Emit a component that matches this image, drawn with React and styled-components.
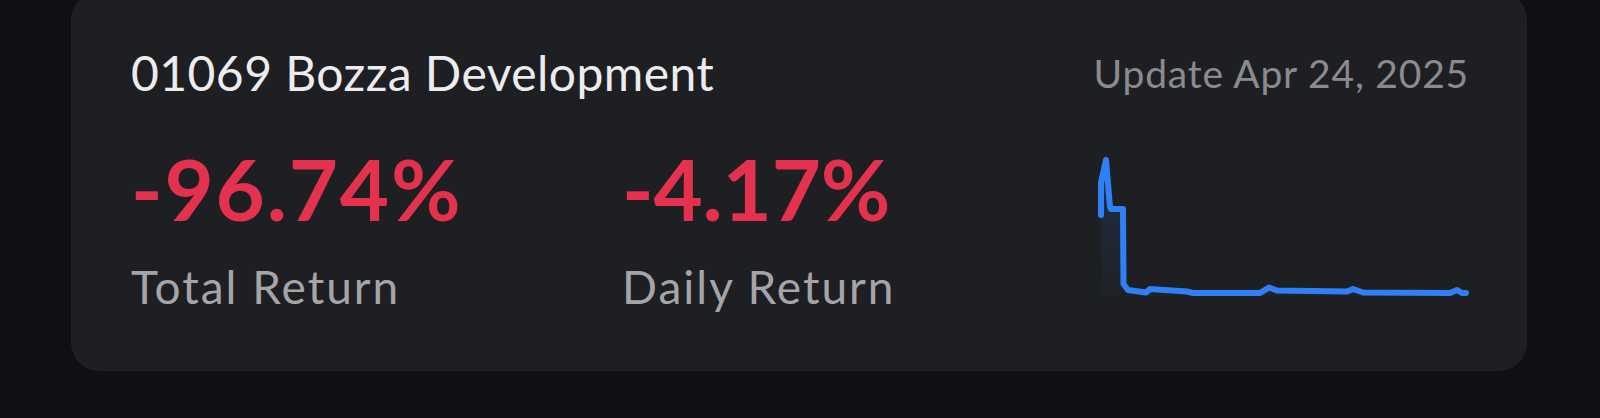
import React from "react"
import styled, { createGlobalStyle } from "styled-components"

const GlobalStyle = createGlobalStyle`
  html, body {
    margin: 0;
    padding: 0;
    background: #0f1013;
  }
  body {
    font-family: "Lato", "Noto Sans", sans-serif;
    overflow: hidden;
  }
`

// chart points in page coords, shifted into the svg box below
const ORIGIN = [1089, 150]
const POINTS = [
  [1101, 215], [1101, 183], [1106, 160], [1110, 207], [1111, 209],
  [1123, 209], [1123.5, 284], [1128, 290], [1146, 292.5], [1150, 289],
  [1187, 291.5], [1193, 293], [1260, 293], [1269, 287.5], [1277, 290.5],
  [1347, 291.5], [1353, 289], [1363, 292.5], [1450, 293], [1457, 290],
  [1462, 293], [1466, 293],
]

const App = () => {
  const pts = POINTS.map(([x, y]) => [x - ORIGIN[0], y - ORIGIN[1]])
  const line = pts.map((p, i) => `${i ? "L" : "M"}${p[0]} ${p[1]}`).join(" ")
  const last = pts[pts.length - 1]
  const area = `${line} L${last[0]} 146 L${pts[0][0]} 146 Z`

  return (
    <>
      <GlobalStyle />
      <Page>
        <Card>
          <Header>
            <Title>01069 Bozza Development</Title>
            <Updated>Update Apr 24, 2025</Updated>
          </Header>
          <Body>
            <Stat $width="491px">
              <Value $tracking={1.8}>-96.74%</Value>
              <Label>Total Return</Label>
            </Stat>
            <Stat $width="auto">
              <Value $tracking={-0.2}>-4.17%</Value>
              <Label>Daily Return</Label>
            </Stat>
            <Chart width="380" height="150" viewBox="0 0 380 150">
              <defs>
                <linearGradient id="fade" x1="0" y1="0" x2="0" y2="1">
                  <stop offset="0%" stopColor="#2f80f7" stopOpacity="0.16" />
                  <stop offset="100%" stopColor="#2f80f7" stopOpacity="0.02" />
                </linearGradient>
              </defs>
              <path d={area} fill="url(#fade)" />
              <path
                d={line}
                fill="none"
                stroke="#2f80f7"
                strokeWidth="6"
                strokeLinejoin="round"
                strokeLinecap="round"
              />
            </Chart>
          </Body>
        </Card>
      </Page>
    </>
  )
}

//Layout
const Page = styled.div`
  width: 1600px;
  height: 418px;
  overflow: hidden;
`

const Card = styled.div`
  margin: -8px 0 0 71px;
  width: 1456px;
  height: 379px;
  box-sizing: border-box;
  padding: 52px 58px 0 60px;
  background: #1e1f22;
  border-radius: 28px;
  display: flex;
  flex-direction: column;
`

const Header = styled.div`
  display: flex;
  justify-content: space-between;
  align-items: flex-start;
`

const Title = styled.div`
  font-size: 48px;
  line-height: 1.2;
  letter-spacing: 0.45px;
  color: #ececee;
  font-weight: 400;
`

const Updated = styled.div`
  margin-top: 6px;
  font-size: 39px;
  line-height: 1.2;
  letter-spacing: 0.8px;
  color: #8b8b8f;
`

const Body = styled.div`
  display: flex;
  align-items: flex-start;
  margin-top: 35px;
`

const Stat = styled.div`
  flex: none;
  width: ${(props) => props.$width};
  display: flex;
  flex-direction: column;
`

const Value = styled.div`
  font-size: 85px;
  font-weight: 700;
  line-height: 1.2;
  letter-spacing: ${(props) => props.$tracking}px;
  color: #e4324e;
`

const Label = styled.div`
  margin-top: 20px;
  font-size: 46px;
  line-height: 1.2;
  letter-spacing: 2px;
  color: #a5a5a9;
`

const Chart = styled.svg`
  flex: none;
  margin-left: auto;
  margin-top: 13px;
  display: block;
`

export default App
